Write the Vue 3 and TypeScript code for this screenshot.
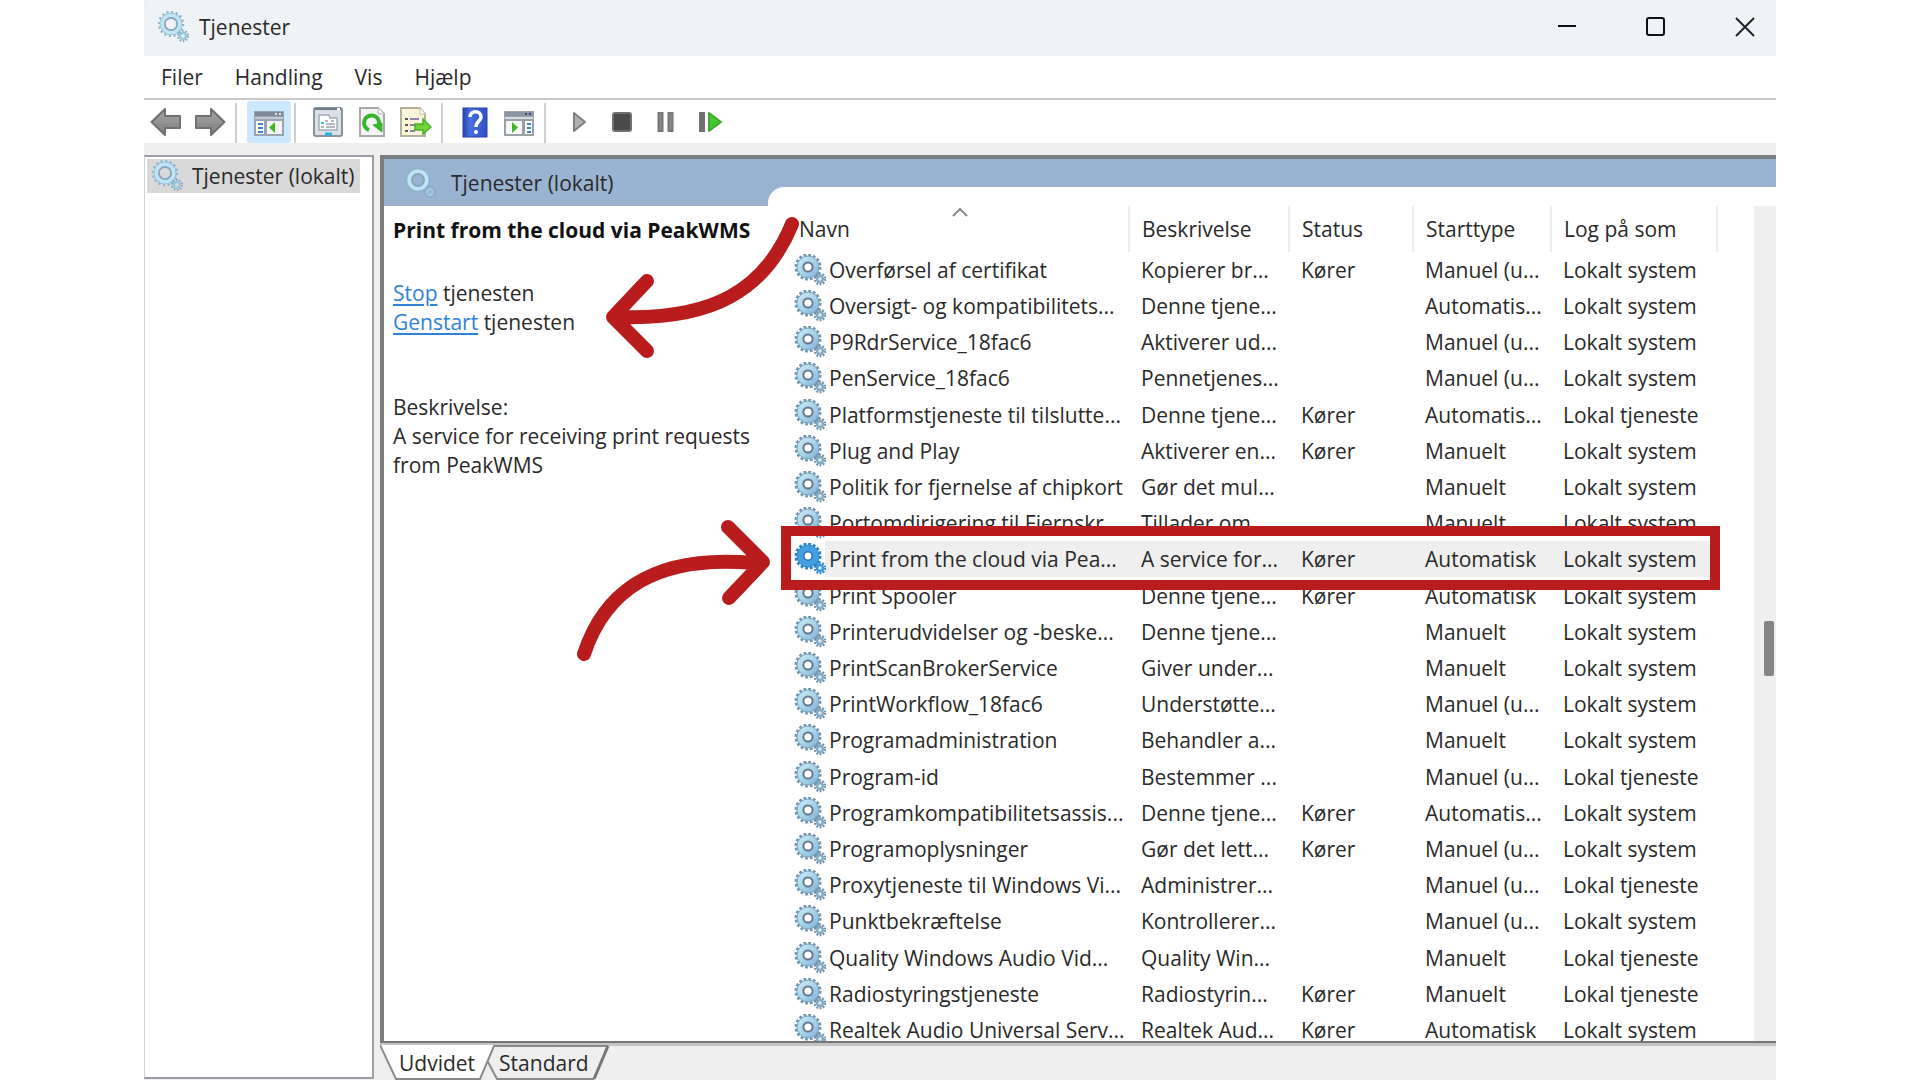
<script setup lang="ts">
import { ref } from 'vue'

interface Service {
  name: string
  description: string
  running: boolean
  start: string
  logon: string
}

const SYSTEM = 'Lokalt system'
const LOCAL = 'Lokal tjeneste'

function service(name: string, description: string, running: boolean, start: string, logon: string): Service {
  return { name, description, running, start, logon }
}

const services: Service[] = [
  service('Overførsel af certifikat', 'Kopierer br...', true, 'Manuel (u...', SYSTEM),
  service('Oversigt- og kompatibilitets...', 'Denne tjene...', false, 'Automatis...', SYSTEM),
  service('P9RdrService_18fac6', 'Aktiverer ud...', false, 'Manuel (u...', SYSTEM),
  service('PenService_18fac6', 'Pennetjenes...', false, 'Manuel (u...', SYSTEM),
  service('Platformstjeneste til tilslutte...', 'Denne tjene...', true, 'Automatis...', LOCAL),
  service('Plug and Play', 'Aktiverer en...', true, 'Manuelt', SYSTEM),
  service('Politik for fjernelse af chipkort', 'Gør det mul...', false, 'Manuelt', SYSTEM),
  service('Portomdirigering til Fjernskr...', 'Tillader om...', false, 'Manuelt', SYSTEM),
  service('Print from the cloud via Pea...', 'A service for...', true, 'Automatisk', SYSTEM),
  service('Print Spooler', 'Denne tjene...', true, 'Automatisk', SYSTEM),
  service('Printerudvidelser og -beske...', 'Denne tjene...', false, 'Manuelt', SYSTEM),
  service('PrintScanBrokerService', 'Giver under...', false, 'Manuelt', SYSTEM),
  service('PrintWorkflow_18fac6', 'Understøtte...', false, 'Manuel (u...', SYSTEM),
  service('Programadministration', 'Behandler a...', false, 'Manuelt', SYSTEM),
  service('Program-id', 'Bestemmer ...', false, 'Manuel (u...', LOCAL),
  service('Programkompatibilitetsassis...', 'Denne tjene...', true, 'Automatis...', SYSTEM),
  service('Programoplysninger', 'Gør det lett...', true, 'Manuel (u...', SYSTEM),
  service('Proxytjeneste til Windows Vi...', 'Administrer...', false, 'Manuel (u...', LOCAL),
  service('Punktbekræftelse', 'Kontrollerer...', false, 'Manuel (u...', SYSTEM),
  service('Quality Windows Audio Vid...', 'Quality Win...', false, 'Manuelt', LOCAL),
  service('Radiostyringstjeneste', 'Radiostyrin...', true, 'Manuelt', LOCAL),
  service('Realtek Audio Universal Serv...', 'Realtek Aud...', true, 'Automatisk', SYSTEM),
]

const selected = ref(8)
const menus = ['Filer', 'Handling', 'Vis', 'Hjælp']
</script>

<template>
  <div class="window">
    <svg class="defs" aria-hidden="true">
      <defs>
        <linearGradient id="arrowGrey" x1="0" y1="0" x2="0" y2="1">
          <stop offset="0" stop-color="#a8a8a8" /><stop offset="1" stop-color="#7c7c7c" />
        </linearGradient>
        <linearGradient id="helpBlue" x1="0" y1="0" x2="1" y2="0">
          <stop offset="0" stop-color="#2743b0" /><stop offset="0.3" stop-color="#4a6fe0" /><stop offset="1" stop-color="#2f50c4" />
        </linearGradient>
        <linearGradient id="gearBlue" x1="0" y1="0" x2="1" y2="1">
          <stop offset="0" stop-color="#cdeaf6" /><stop offset="0.5" stop-color="#a9d4ea" /><stop offset="1" stop-color="#7fb0d2" />
        </linearGradient>
        <symbol id="gear" viewBox="0 0 32 32">
          <circle cx="14" cy="13" r="12" fill="none" stroke="#7597ae" stroke-width="3" stroke-dasharray="2.8 1.9" />
          <circle cx="14" cy="13" r="11" fill="url(#gearBlue)" stroke="#78a4c0" />
          <circle cx="14" cy="13" r="4.600" fill="#fff" stroke="#64798e" stroke-width="2" />
          <circle cx="26" cy="25" r="5" fill="none" stroke="#6f93ac" stroke-width="2.600" stroke-dasharray="1.800 1.340" />
          <circle cx="26" cy="25" r="3" fill="#dcebf3" stroke="#86aac2" stroke-width="2.400" />
        </symbol>
        <symbol id="gear-light" viewBox="0 0 32 32">
          <circle cx="14" cy="13" r="12" fill="none" stroke="#8fb4cc" stroke-width="2.400" stroke-dasharray="2 2.700" />
          <circle cx="14" cy="13" r="8.600" fill="none" stroke="#8fbcd8" stroke-width="5.400" />
          <circle cx="14" cy="13" r="8.800" fill="none" stroke="#bfe4f4" stroke-width="3.600" />
          <circle cx="14" cy="13" r="6" fill="none" stroke="#8aa0b4" stroke-width="1.400" />
          <circle cx="26" cy="25" r="5" fill="none" stroke="#86a9c0" stroke-width="2.200" stroke-dasharray="1.600 1.540" />
          <circle cx="26" cy="25" r="3" fill="none" stroke="#a0c6dc" stroke-width="2.400" />
        </symbol>
        <symbol id="gear-active" viewBox="0 0 32 32">
          <circle cx="14" cy="13" r="12" fill="none" stroke="#2c7fc6" stroke-width="3" stroke-dasharray="2.800 1.900" />
          <circle cx="14" cy="13" r="11" fill="#459fe2" stroke="#2e86ce" />
          <circle cx="14" cy="13" r="4.200" fill="#fff" stroke="#2c78bb" stroke-width="1.600" />
          <circle cx="26" cy="25" r="5" fill="none" stroke="#3388cc" stroke-width="2.600" stroke-dasharray="1.800 1.340" />
          <circle cx="26" cy="25" r="3" fill="#dff0fb" stroke="#3f97da" stroke-width="2.600" />
        </symbol>
      </defs>
    </svg>

    <header class="titlebar">
      <svg class="gear"><use href="#gear-light" /></svg>
      <h1>Tjenester</h1>
      <div class="controls">
        <button type="button" aria-label="Minimer"><svg width="20" height="20"><path d="M1 9H19" stroke="#111" stroke-width="2" /></svg></button>
        <button type="button" aria-label="Maksimer"><svg width="20" height="20"><rect x="1" y="1" width="17" height="17" rx="2" fill="none" stroke="#111" stroke-width="2" /></svg></button>
        <button type="button" aria-label="Luk"><svg width="20" height="20"><path d="M1 1L19 19M19 1L1 19" stroke="#222" stroke-width="2" /></svg></button>
      </div>
    </header>

    <nav class="menubar">
      <button v-for="menu in menus" :key="menu" type="button">{{ menu }}</button>
    </nav>

    <div class="toolbar">
      <button type="button" aria-label="Tilbage">
        <svg width="32" height="32"><path d="M1.500 16L15 3V10H30V22H15V29Z" fill="url(#arrowGrey)" stroke="#707070" stroke-width="2" stroke-linejoin="round" /></svg>
      </button>
      <button type="button" aria-label="Frem">
        <svg width="32" height="32"><path d="M30.500 16L17 3V10H2V22H17V29Z" fill="url(#arrowGrey)" stroke="#707070" stroke-width="2" stroke-linejoin="round" /></svg>
      </button>
      <i class="sep"></i>
      <button type="button" class="pressed" aria-label="Vis konsoltræ">
        <svg width="32" height="32">
          <rect x="1" y="5" width="30" height="25" fill="#9aa3b1" /><rect x="2" y="6" width="28" height="4" fill="#7d8899" />
          <path d="M22 8h2M26 8h2" stroke="#dfe6ee" stroke-width="2" />
          <rect x="2" y="11" width="28" height="2" fill="#c3cad4" />
          <rect x="3" y="15" width="8" height="13" fill="#fff" /><path d="M5 18h5M5 22h5M5 26h5" stroke="#3f7fd0" stroke-width="2" />
          <rect x="14" y="15" width="15" height="13" fill="#f4f4f4" /><path d="M16 21.500L22 16V27Z" fill="#3fb82c" />
        </svg>
      </button>
      <i class="sep"></i>
      <button type="button" aria-label="Egenskaber">
        <svg width="32" height="32">
          <rect x="2" y="2" width="28" height="28" rx="2" fill="#dde1e6" stroke="#8b939d" stroke-width="2" />
          <path d="M3 3h26" stroke="#707b8a" stroke-width="2" /><path d="M25 3h3" stroke="#fff" stroke-width="2" />
          <path d="M7 9H17L18 12H25V24H7Z" fill="#fff" stroke="#a5adb8" stroke-width="1.500" />
          <path d="M9 17h3" stroke="#3bc3ea" stroke-width="2" /><path d="M13 15h3M19 15h3M14 18h9M9 21h3M14 21h9" stroke="#9aa2ac" stroke-width="1.500" />
          <path d="M13 28h7" stroke="#23b5e0" stroke-width="3" />
        </svg>
      </button>
      <button type="button" aria-label="Opdater">
        <svg width="32" height="32">
          <path d="M4 2H22L28 8V30H4Z" fill="#f4f4f4" stroke="#a8a8a8" stroke-width="2" /><path d="M22 2V8H28" fill="#fff" stroke="#b8b8b8" />
          <path d="M13 24A7.500 7.500 0 1 1 23 18" fill="none" stroke="#35b52c" stroke-width="4" />
          <path d="M17 19L26 17V26Z" fill="#35b52c" stroke="#35b52c" />
        </svg>
      </button>
      <button type="button" aria-label="Eksporter liste">
        <svg width="32" height="32">
          <path d="M1 2H20L25 8V30H1Z" fill="#fbf5da" stroke="#b5b09a" stroke-width="2" /><path d="M20 2V8H25" fill="#fff" stroke="#c4c0ae" />
          <path d="M5 13h3M5 19h3M5 25h3" stroke="#555" stroke-width="2" /><path d="M10 13h9M10 19h5M10 25h5" stroke="#8b86a8" stroke-width="2" />
          <path d="M15 18H23V13L31 21L23 28V24H15Z" fill="#6fd43b" stroke="#43b22a" stroke-width="1.500" />
        </svg>
      </button>
      <i class="sep"></i>
      <button type="button" aria-label="Hjælp">
        <svg width="32" height="32">
          <rect x="4" y="2" width="24" height="29" fill="url(#helpBlue)" stroke="#2843a4" />
          <path d="M11 11C11 4 22 4 22 11C22 15 17 15 17 21" fill="none" stroke="#fff" stroke-width="3.500" /><rect x="15" y="24" width="4" height="4" rx="2" fill="#fff" />
        </svg>
      </button>
      <button type="button" aria-label="Vis handlingsrude">
        <svg width="32" height="32">
          <rect x="1" y="5" width="30" height="25" fill="#9aa0a8" /><rect x="2" y="6" width="28" height="4" fill="#8a94a2" />
          <path d="M22 8h2M26 8h2" stroke="#3c5480" stroke-width="2" />
          <rect x="2" y="11" width="28" height="2" fill="#d5dae0" />
          <rect x="3" y="15" width="16" height="13" fill="#f7f7f7" /><path d="M9 16L15 21.500L9 27Z" fill="#3fb82c" />
          <rect x="22" y="15" width="7" height="13" fill="#fff" /><path d="M24 18h4M24 22h4M24 26h4" stroke="#3f7fd0" stroke-width="2" />
        </svg>
      </button>
      <i class="sep"></i>
      <button type="button" aria-label="Start tjeneste">
        <svg width="32" height="32"><path d="M12 7L23 16L12 25Z" fill="#b0b0b0" stroke="#808080" stroke-width="2" stroke-linejoin="round" /></svg>
      </button>
      <button type="button" aria-label="Stop tjeneste">
        <svg width="32" height="32"><rect x="7" y="7" width="18" height="18" rx="2" fill="#4b4b4b" stroke="#707070" stroke-width="2" /></svg>
      </button>
      <button type="button" aria-label="Pause">
        <svg width="32" height="32"><path d="M10.500 6V26M20.500 6V26" stroke="#777" stroke-width="6" /><path d="M10.500 8V24M20.500 8V24" stroke="#8c8c8c" stroke-width="2" /></svg>
      </button>
      <button type="button" aria-label="Genstart tjeneste">
        <svg width="32" height="32"><path d="M8 6V26" stroke="#707070" stroke-width="6" /><path d="M15 7L27 16L15 25Z" fill="#45c634" stroke="#3aae2c" stroke-width="2" stroke-linejoin="round" /></svg>
      </button>
    </div>

    <div class="workspace">
      <aside class="tree">
        <div class="tree-item"><svg class="gear"><use href="#gear-light" /></svg><span>Tjenester (lokalt)</span></div>
      </aside>

      <main class="main">
        <div class="pane">
          <div class="banner">
            <div class="banner-title"><svg class="gear"><use href="#gear-light" /></svg><span>Tjenester (lokalt)</span></div>
            <div class="notch"></div>
          </div>

          <div class="body">
            <section class="details">
              <h2>Print from the cloud via PeakWMS</h2>
              <p class="actions"><a href="#stop">Stop</a> tjenesten<br /><a href="#genstart">Genstart</a> tjenesten</p>
              <p>Beskrivelse:<br />A service for receiving print requests from PeakWMS</p>
              <svg class="arrow arrow-actions" width="200" height="150">
                <path d="M188 14C161 80 109 110 16 107M43 71L9 107L43 141" />
              </svg>
              <svg class="arrow arrow-row" width="200" height="150">
                <path d="M10 136C31 72 82 36 180 45M154 9L189 44L155 80" />
              </svg>
            </section>

            <section class="list">
              <div class="scroller">
                <table>
                  <colgroup>
                    <col /><col class="c-desc" /><col class="c-status" /><col class="c-start" /><col class="c-logon" /><col class="c-rest" />
                  </colgroup>
                  <thead>
                    <tr>
                      <th scope="col">Navn<svg class="sort" width="16" height="9"><path d="M1 8L8 1L15 8" fill="none" stroke="#888" stroke-width="2" /></svg></th>
                      <th scope="col">Beskrivelse</th>
                      <th scope="col">Status</th>
                      <th scope="col">Starttype</th>
                      <th scope="col">Log på som</th>
                      <td></td>
                    </tr>
                  </thead>
                  <tbody>
                    <tr v-for="(item, index) in services" :key="item.name" :class="{ selected: index === selected }" @click="selected = index">
                      <td>
                        <div class="name">
                          <svg class="gear"><use :href="index === selected ? '#gear-active' : '#gear'" /></svg><span>{{ item.name }}</span>
                        </div>
                      </td>
                      <td>{{ item.description }}</td>
                      <td>{{ item.running ? 'Kører' : '' }}</td>
                      <td>{{ item.start }}</td>
                      <td>{{ item.logon }}</td>
                      <td></td>
                    </tr>
                  </tbody>
                </table>
              </div>
              <div class="scrollbar"><div class="thumb"></div></div>
              <div class="callout"></div>
            </section>
          </div>
        </div>

        <div class="tabs">
          <svg class="tab-shapes" width="230" height="40">
            <path d="M0 0L16 34H100L114 0Z" fill="#fff" />
            <path d="M0 0L16 34H100L114 1H228M108 17L117 34H214" fill="none" stroke="#8a8a8a" stroke-width="2" />
            <path d="M214 34L228 1" fill="none" stroke="#777" stroke-width="3" />
          </svg>
          <button type="button">Udvidet</button>
          <button type="button">Standard</button>
        </div>
      </main>
    </div>
  </div>
</template>

<style>
body {
  margin: 0;
  background: #fff;
}
</style>

<style scoped>
.window {
  display: flex;
  flex-direction: column;
  box-sizing: border-box;
  width: 85%;
  height: 100vh;
  margin: 0 auto;
  overflow: hidden;
  background: #efefef;
  color: #2a2a2a;
  font: 21px/28px 'Open Sans', 'Noto Sans', sans-serif;
}

.defs {
  position: absolute;
  width: 0;
  height: 0;
}

button {
  display: flex;
  align-items: center;
  justify-content: center;
  padding: 0;
  border: 0;
  background: none;
  color: inherit;
  font: inherit;
}

.gear {
  flex: none;
  width: 32px;
  height: 32px;
}

.titlebar {
  display: flex;
  flex: none;
  align-items: center;
  box-sizing: border-box;
  height: 56px;
  padding: 0 0 2px 13px;
  border-top-left-radius: 8px;
  background: #eff3f5;
}

.titlebar h1 {
  margin: 0 0 0 10px;
  font-size: 21px;
  font-weight: 400;
  line-height: 28px;
}

.controls {
  display: flex;
  margin-left: auto;
}

.controls button {
  width: 89px;
  height: 54px;
}

.controls button:last-child {
  justify-content: flex-end;
  width: 76px;
  padding-right: 21px;
}

.menubar {
  display: flex;
  flex: none;
  align-items: center;
  gap: 32px;
  height: 42px;
  padding: 0 17px;
  border-bottom: 2px solid #c8c8c8;
  background: #fff;
}

.toolbar {
  display: flex;
  flex: none;
  align-items: flex-end;
  height: 43px;
  background: #fff;
}

.toolbar button {
  width: 44px;
  height: 42px;
}

.toolbar .pressed {
  border-radius: 3px;
  background: #cce8ff;
}

.sep {
  width: 2px;
  height: 40px;
  margin: 0 10px 0 3px;
  background: #cfcfcf;
}

.workspace {
  display: flex;
  flex: 1;
  gap: 6px;
  min-height: 0;
  padding-top: 12px;
}

.tree {
  flex: none;
  box-sizing: border-box;
  width: 230px;
  margin-bottom: 1px;
  padding: 2px;
  border: 2px solid #9a9fa8;
  border-left: 1px solid #d0d0d0;
  background: #fff;
}

.tree-item {
  display: flex;
  align-items: center;
  gap: 9px;
  width: 209px;
  height: 34px;
  padding-left: 4px;
  background: #d9d9d9;
  white-space: nowrap;
}

.main {
  display: flex;
  flex: 1;
  flex-direction: column;
  min-width: 0;
}

.pane {
  display: flex;
  flex: 1;
  flex-direction: column;
  min-height: 0;
  border-top: 4px solid #7c7f82;
  border-bottom: 2px solid #777;
  border-left: 4px solid #7c7c7c;
  background: #fff;
}

.banner {
  display: flex;
  flex: none;
  align-items: flex-end;
  height: 47px;
  background: #99b3d1;
}

.banner-title {
  display: flex;
  align-items: center;
  gap: 15px;
  box-sizing: border-box;
  width: 384px;
  height: 47px;
  padding-left: 20px;
}

.notch {
  flex: 1;
  height: 19px;
  border-top-left-radius: 16px;
  background: #fff;
}

.body {
  display: flex;
  flex: 1;
  min-height: 0;
}

.details {
  position: relative;
  flex: none;
  box-sizing: border-box;
  width: 407px;
  padding: 10px 24px 0 9px;
  line-height: 29px;
}

.details h2 {
  margin: 0 0 34px;
  color: #111;
  font-size: 21px;
  font-weight: 700;
  line-height: 29px;
  white-space: nowrap;
}

.details p {
  margin: 0 0 56px;
}

.details a {
  color: #2f82d8;
  text-decoration-thickness: 2px;
  text-underline-offset: 3px;
}

.list {
  position: relative;
  display: flex;
  flex: 1;
  min-width: 0;
}

.scroller {
  flex: 1;
  min-width: 0;
  overflow: hidden;
}

table {
  width: 100%;
  table-layout: fixed;
  border-collapse: collapse;
}

.c-desc { width: 160px; }
.c-status { width: 124px; }
.c-start { width: 138px; }
.c-logon { width: 166px; }
.c-rest { width: 37px; }

th,
td {
  padding: 0 0 0 12px;
  font-weight: 400;
  text-align: left;
  white-space: nowrap;
}

th {
  position: relative;
  height: 46px;
  border-right: 2px solid #ececec;
}

th:first-child {
  padding-left: 8px;
}

.sort {
  position: absolute;
  top: 2px;
  left: 161px;
}

tbody td {
  height: 36px;
}

tbody tr:nth-child(5n) td {
  height: 37px;
}

tbody td:first-child {
  padding-left: 3px;
}

.name {
  display: flex;
  align-items: center;
  gap: 3px;
}

.selected td:not(:last-child) {
  background: #efefef;
}

.selected td:first-child {
  background: linear-gradient(90deg, #fff 34px, #efefef 34px);
}

.scrollbar {
  flex: none;
  box-sizing: border-box;
  width: 22px;
  padding: 415px 2px 0 10px;
  background: #efefef;
}

.thumb {
  height: 55px;
  border-radius: 2px;
  background: #858585;
}

.callout {
  position: absolute;
  top: 320px;
  right: 56px;
  left: -10px;
  box-sizing: border-box;
  height: 64px;
  border: 10px solid #b81c1c;
}

.arrow {
  position: absolute;
  z-index: 1;
  fill: none;
  stroke: #b81c1c;
  stroke-width: 14px;
  stroke-linecap: round;
  stroke-linejoin: round;
}

.arrow-actions {
  top: 4px;
  left: 220px;
}

.arrow-row {
  top: 312px;
  left: 190px;
}

.tabs {
  position: relative;
  display: flex;
  flex: none;
  gap: 24px;
  height: 34px;
  padding-left: 19px;
  border-top: 3px solid #c4c4c4;
}

.tabs button {
  position: relative;
  height: 34px;
}

.tab-shapes {
  position: absolute;
  top: -1px;
  left: 0;
}
</style>
